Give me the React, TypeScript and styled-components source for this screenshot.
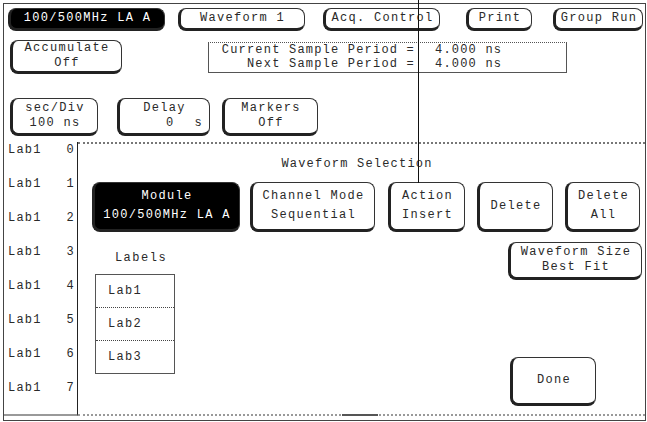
import styled, { createGlobalStyle } from "styled-components";

const GlobalStyle = createGlobalStyle`
  html, body {
    margin: 0;
    padding: 0;
    background: #fff;
  }
  body {
    font-family: "Liberation Mono", "DejaVu Sans Mono", monospace;
    color: #2a2a2a;
  }
`;

const Screen = styled.div`
  position: relative;
  width: 647px;
  height: 422px;
  box-sizing: border-box;
  padding: 3px 1px 0 3px;
  background: #fff;
  overflow: hidden;
`;

const Frame = styled.div`
  box-sizing: border-box;
  width: 643px;
  height: 418px;
  border: 1px solid #444;
  display: flex;
  flex-direction: column;
`;

const Bar = styled.div<{ $top: number; $align?: string }>`
  display: flex;
  align-items: ${(p) => p.$align || "center"};
  margin-top: ${(p) => p.$top}px;
`;

const Key = styled.div<{ $w: number; $h: number; $ml?: number; $dark?: boolean }>`
  box-sizing: border-box;
  flex: none;
  width: ${(p) => p.$w}px;
  height: ${(p) => p.$h}px;
  margin-left: ${(p) => p.$ml ?? 0}px;
  border: 1px solid #333;
  border-left: 3px solid #222;
  border-bottom: 3px solid #222;
  border-radius: 8px;
  background: ${(p) => (p.$dark ? "#000" : "#fff")};
  color: ${(p) => (p.$dark ? "#fff" : "#2a2a2a")};
  display: flex;
  flex-direction: column;
  align-items: center;
  justify-content: space-evenly;
  font-size: 12px;
  letter-spacing: 1.3px;
  line-height: 13px;
  white-space: pre;
`;

const KeyLine = styled.div<{ $end?: boolean }>`
  align-self: ${(p) => (p.$end ? "stretch" : "center")};
  display: flex;
  justify-content: ${(p) => (p.$end ? "flex-end" : "center")};
  gap: 20px;
  padding-right: ${(p) => (p.$end ? 6 : 0)}px;
`;

const InfoBox = styled.div`
  box-sizing: border-box;
  width: 359px;
  height: 31px;
  margin-left: 86px;
  margin-top: 2px;
  border: 1px solid #555;
  border-top-style: dotted;
  display: grid;
  grid-template-columns: 206px 1fr;
  align-content: center;
  row-gap: 1px;
  font-size: 12px;
  letter-spacing: 1.2px;
  line-height: 13px;
  white-space: pre;
`;

const InfoLabel = styled.span`
  text-align: right;
`;

const InfoValue = styled.span`
  padding-left: 20px;
`;

const Main = styled.div`
  display: flex;
  margin-top: 6px;
  height: 274px;
`;

const LabelColumn = styled.div`
  box-sizing: border-box;
  width: 74px;
  flex: none;
  border-right: 1px solid #222;
  border-bottom: 2px solid #999;
  display: flex;
  flex-direction: column;
  font-size: 12px;
  letter-spacing: 1.2px;
`;

const LabelRow = styled.div`
  height: 34px;
  flex: none;
  display: flex;
  justify-content: space-between;
  line-height: 16px;
  padding: 0 2px 0 4px;
`;

const Dialog = styled.div`
  position: relative;
  flex: 1;
  box-sizing: border-box;
  border-top: 2px dotted #777;
  border-bottom: 2px dotted #999;
  display: flex;
  flex-direction: column;
  padding: 0 3px 8px 14px;
`;

const Title = styled.div`
  text-align: center;
  font-size: 12px;
  letter-spacing: 1.2px;
  line-height: 14px;
  margin-top: 13px;
  padding-right: 20px;
`;

const DialogBody = styled.div`
  flex: 1;
  display: flex;
  justify-content: space-between;
  margin-top: 10px;
`;

const LabelsPanel = styled.div`
  display: flex;
  flex-direction: column;
  margin-left: 3px;
  width: 80px;
`;

const PanelTitle = styled.div`
  text-align: center;
  font-size: 12px;
  letter-spacing: 1.5px;
  line-height: 14px;
  margin-top: 9px;
  margin-left: 12px;
`;

const LabelList = styled.div`
  margin-top: 9px;
  border: 1px solid #555;
  display: flex;
  flex-direction: column;
`;

const LabelItem = styled.div`
  height: 32px;
  display: flex;
  align-items: center;
  padding-left: 12px;
  font-size: 12px;
  letter-spacing: 1.3px;
  & + & {
    border-top: 1px dotted #444;
  }
`;

const SidePanel = styled.div`
  width: 134px;
  display: flex;
  flex-direction: column;
  align-items: flex-start;
  justify-content: space-between;
`;

const Ruler = styled.div`
  position: absolute;
  left: 264px;
  bottom: -2px;
  width: 36px;
  height: 2px;
  background: #555;
`;

const Cursor = styled.div`
  position: absolute;
  left: 418px;
  top: 0;
  width: 1px;
  height: 183px;
  background: #111;
`;

const labelRows = ["0", "1", "2", "3", "4", "5", "6", "7"];

export default function App() {
  return (
    <>
      <GlobalStyle />
      <Screen>
        <Frame>
          <Bar $top={4}>
            <Key $w={157} $h={23} $ml={4} $dark>
              100/500MHz LA A
            </Key>
            <Key $w={127} $h={23} $ml={13}>
              Waveform 1
            </Key>
            <Key $w={117} $h={23} $ml={18}>
              Acq. Control
            </Key>
            <Key $w={66} $h={23} $ml={26}>
              Print
            </Key>
            <Key $w={90} $h={23} $ml={21}>
              Group Run
            </Key>
          </Bar>
          <Bar $top={9} $align="flex-start">
            <Key $w={112} $h={34} $ml={6}>
              <KeyLine>Accumulate</KeyLine>
              <KeyLine>Off</KeyLine>
            </Key>
            <InfoBox>
              <InfoLabel>Current Sample Period =</InfoLabel>
              <InfoValue>4.000 ns</InfoValue>
              <InfoLabel>Next Sample Period =</InfoLabel>
              <InfoValue>4.000 ns</InfoValue>
            </InfoBox>
          </Bar>
          <Bar $top={24}>
            <Key $w={88} $h={38} $ml={6}>
              <KeyLine>sec/Div</KeyLine>
              <KeyLine>100 ns</KeyLine>
            </Key>
            <Key $w={93} $h={38} $ml={19}>
              <KeyLine>Delay</KeyLine>
              <KeyLine $end>
                <span>0</span>
                <span>s</span>
              </KeyLine>
            </Key>
            <Key $w={96} $h={38} $ml={12}>
              <KeyLine>Markers</KeyLine>
              <KeyLine>Off</KeyLine>
            </Key>
          </Bar>
          <Main>
            <LabelColumn>
              {labelRows.map((n) => (
                <LabelRow key={n}>
                  <span>Lab1</span>
                  <span>{n}</span>
                </LabelRow>
              ))}
            </LabelColumn>
            <Dialog>
              <Title>Waveform Selection</Title>
              <Bar $top={11}>
                <Key $w={148} $h={50} $dark>
                  <KeyLine>Module</KeyLine>
                  <KeyLine>100/500MHz LA A</KeyLine>
                </Key>
                <Key $w={125} $h={50} $ml={10}>
                  <KeyLine>Channel Mode</KeyLine>
                  <KeyLine>Sequential</KeyLine>
                </Key>
                <Key $w={77} $h={50} $ml={13}>
                  <KeyLine>Action</KeyLine>
                  <KeyLine>Insert</KeyLine>
                </Key>
                <Key $w={76} $h={50} $ml={12}>
                  Delete
                </Key>
                <Key $w={75} $h={50} $ml={12}>
                  <KeyLine>Delete</KeyLine>
                  <KeyLine>All</KeyLine>
                </Key>
              </Bar>
              <DialogBody>
                <LabelsPanel>
                  <PanelTitle>Labels</PanelTitle>
                  <LabelList>
                    <LabelItem>Lab1</LabelItem>
                    <LabelItem>Lab2</LabelItem>
                    <LabelItem>Lab3</LabelItem>
                  </LabelList>
                </LabelsPanel>
                <SidePanel>
                  <Key $w={134} $h={38}>
                    <KeyLine>Waveform Size</KeyLine>
                    <KeyLine>Best Fit</KeyLine>
                  </Key>
                  <Key $w={86} $h={49} $ml={2}>
                    Done
                  </Key>
                </SidePanel>
              </DialogBody>
              <Ruler />
            </Dialog>
          </Main>
        </Frame>
        <Cursor />
      </Screen>
    </>
  );
}
